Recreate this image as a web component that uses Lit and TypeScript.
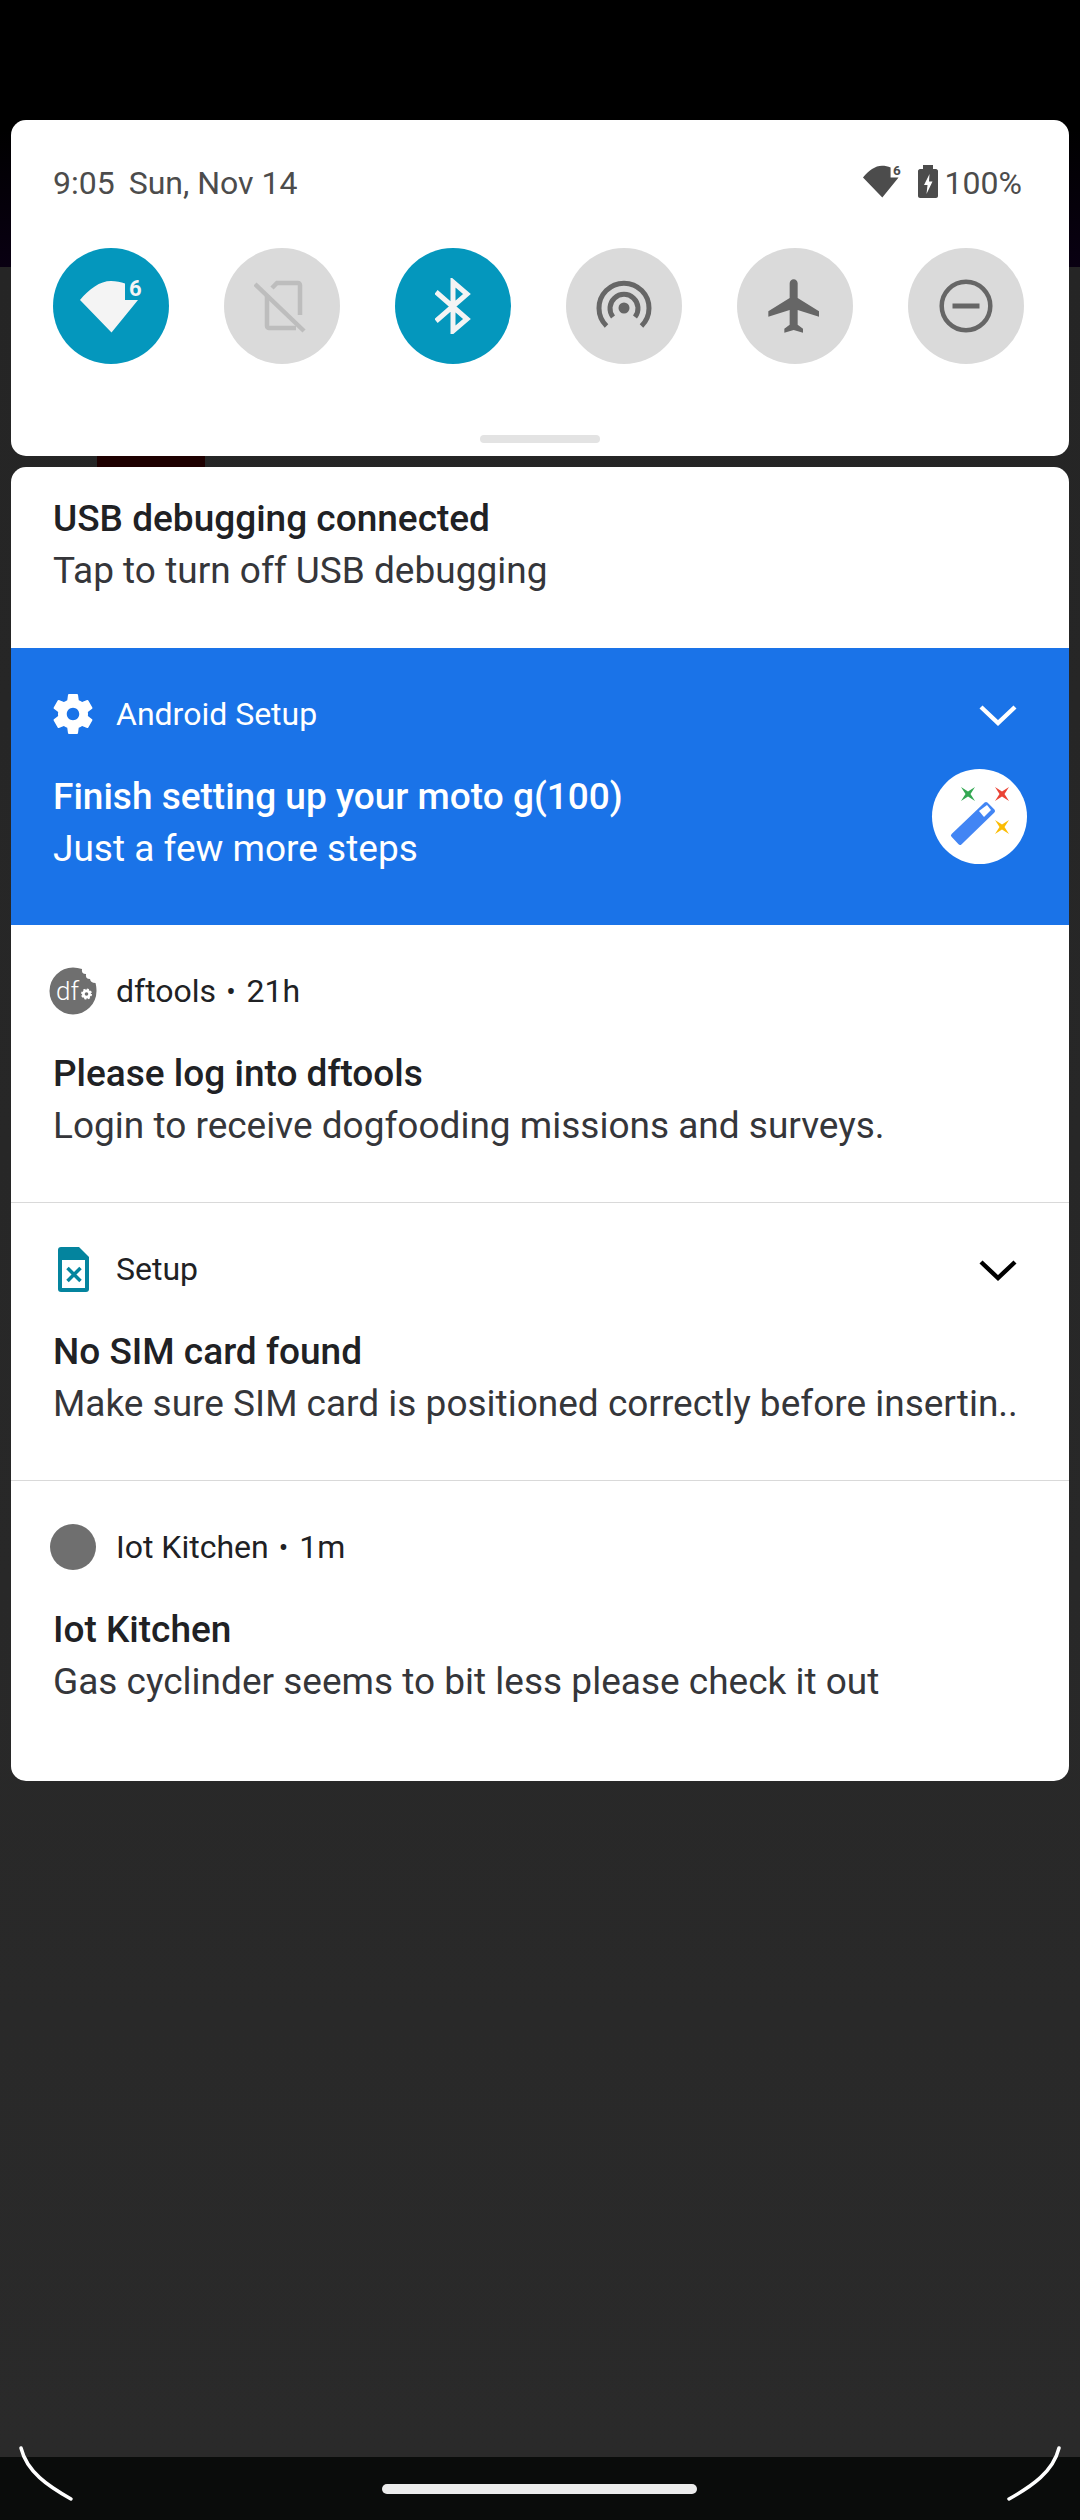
import { LitElement, css, html, svg } from 'lit'
import { customElement } from 'lit/decorators.js'

// wifi wedge with the little "6", drawn on a 62x53 box
const wifi6 = (fill: string) => svg`
  <path fill=${fill} d="M0 20C9 9 20 1 31 1c5 0 10 1 14 2.500v16.500h13L31.500 52.500Z"/>
  <text x="49" y="16" font-family="Roboto, sans-serif" font-size="22" font-weight="700" fill=${fill}>6</text>
`

const star = (x: number, y: number, fill: string) => svg`
  <path fill=${fill} transform="translate(${x} ${y})" d="M-7-7 0-2.500 7-7 2.500 0 7 7 0 2.500-7 7-2.500 0Z"/>
`

@customElement('qs-tile')
export class QsTile extends LitElement {
  static styles = css`
    :host {
      display: flex;
      align-items: center;
      justify-content: center;
      width: 116px;
      height: 116px;
      border-radius: 50%;
      background: #dadada;
    }
    :host([on]) {
      background: #0497bd;
    }
  `

  render() {
    return html`<slot></slot>`
  }
}

@customElement('notif-row')
export class NotifRow extends LitElement {
  static properties = {
    app: {},
    title: {},
    body: {},
    time: {},
    chevron: { type: Boolean },
  }
  app = ''
  title = ''
  body = ''
  time = ''
  chevron = false

  static styles = css`
    :host {
      display: block;
      color: #202124;
    }
    .head {
      display: flex;
      align-items: center;
      height: 48px;
      padding: 42px 42px 0 37px;
    }
    .icon {
      width: 50px;
      height: 48px;
      margin-right: 18px;
      display: flex;
      align-items: center;
      justify-content: center;
    }
    .app {
      font-size: 32px;
      white-space: nowrap;
    }
    .dot {
      margin: 0 11px 0 10px;
      font-size: 28px;
    }
    .chev {
      margin: 1px 10px 0 auto;
      display: flex;
      color: var(--chev, currentColor);
    }
    .title {
      margin: 33px 42px 0;
      font-size: 37px;
      line-height: 51.500px;
      font-weight: 500;
    }
    .body {
      margin: 0 20px 0 42px;
      font-size: 37px;
      line-height: 51.500px;
      white-space: nowrap;
      overflow: hidden;
      color: var(--body, #35363a);
    }
  `

  render() {
    return html`
      <div class="head">
        <div class="icon"><slot name="icon"></slot></div>
        <span class="app">${this.app}</span>
        ${this.time ? html`<span class="dot">•</span><span class="app">${this.time}</span>` : ''}
        ${this.chevron
          ? html`<span class="chev">
              <svg width="38" height="22" viewBox="0 0 38 22">
                <path d="M2 3 19 19 36 3" fill="none" stroke="currentColor" stroke-width="4.400"/>
              </svg>
            </span>`
          : ''}
      </div>
      <div class="title">${this.title}</div>
      <div class="body">${this.body}</div>
    `
  }
}

@customElement('app-root')
export class AppRoot extends LitElement {
  static styles = css`
    :host {
      display: block;
      width: 1080px;
      height: 2520px;
      position: relative;
      overflow: hidden;
      font-family: Roboto, 'Liberation Sans', sans-serif;
      background:
        linear-gradient(#000 130px, #090012 267px, transparent 267px),
        linear-gradient(#252525 267px, #2a2a2a 2457px);
    }
    .page {
      display: flex;
      flex-direction: column;
      gap: 11px;
      padding: 120px 11px 0;
    }
    .card {
      background: #fff;
      border-radius: 15px;
      overflow: hidden;
    }
    .qs {
      height: 336px;
      box-sizing: border-box;
      padding: 0 45px 0 42px;
      display: flex;
      flex-direction: column;
      position: relative;
    }
    .status {
      display: flex;
      align-items: center;
      height: 50px;
      margin-top: 38px;
      font-size: 32px;
      color: #4c4c4c;
    }
    .date {
      margin-left: 14px;
    }
    .sys {
      margin: 0 2px 0 auto;
      display: flex;
      align-items: center;
    }
    .sys svg {
      margin-top: -3px;
    }
    .wifi {
      overflow: visible;
    }
    .batt {
      margin: 0 7px 0 17px;
    }
    .tiles {
      display: flex;
      justify-content: space-between;
      margin-top: 40px;
    }
    .handle {
      position: absolute;
      left: 469px;
      bottom: 13px;
      width: 120px;
      height: 8px;
      border-radius: 4px;
      background: #e3e3e3;
    }
    .usb {
      height: 181px;
      box-sizing: border-box;
      padding: 26px 42px 0;
      color: #202124;
    }
    .usb div {
      font-size: 37px;
      line-height: 51.500px;
    }
    .usb .t {
      font-weight: 500;
    }
    .usb .s {
      color: #35363a;
    }
    .blue {
      position: relative;
      height: 277px;
      background: #1a73e8;
    }
    .blue notif-row {
      color: #fff;
      --body: #fff;
    }
    .list notif-row {
      height: 278px;
      border-bottom: 1px solid #d9d9d9;
      box-sizing: border-box;
    }
    .list notif-row:last-child {
      height: 300px;
      border-bottom: none;
    }
    .list .setup {
      --chev: #000;
    }
    .magic {
      position: absolute;
      right: 42px;
      top: 121px;
      width: 95px;
      height: 95px;
      border-radius: 50%;
      background: #fff;
    }
    .strip {
      position: absolute;
      top: 456px;
      left: 97px;
      width: 108px;
      height: 11px;
      background: #1e0000;
    }
    .nav {
      position: absolute;
      left: 0;
      right: 0;
      bottom: 0;
      height: 63px;
      background: #0a0c0b;
    }
    .pill {
      position: absolute;
      left: 382px;
      top: 27px;
      width: 315px;
      height: 10px;
      border-radius: 5px;
      background: #ececec;
    }
    .curves {
      position: absolute;
      left: 0;
      bottom: 0;
    }
  `

  render() {
    return html`
      <div class="strip"></div>
      <div class="page">
        <div class="card qs">
          <div class="status">
            <span>9:05</span><span class="date">Sun, Nov 14</span>
            <span class="sys">
              <svg class="wifi" width="38" height="33" viewBox="0 0 62 53">${wifi6('#4c4c4c')}</svg>
              <svg class="batt" width="20" height="33" viewBox="0 0 20 33">
                <path fill="#4c4c4c" d="M5 0h10v4h3c1 0 2 1 2 2v25c0 1-1 2-2 2H2c-1 0-2-1-2-2V6c0-1 1-2 2-2h3z"/>
                <path fill="#fff" d="M11.500 9 6 20h3.500l-1 9 6-12.500H11z"/>
              </svg>
              <span>100%</span>
            </span>
          </div>
          <div class="tiles">
            <qs-tile on>
              <svg class="wifi" width="62" height="53" viewBox="0 0 62 53">${wifi6('#f4f4f4')}</svg>
            </qs-tile>
            <qs-tile>
              <svg width="56" height="56" viewBox="254 278 56 56" fill="none" stroke="#bdbdbd" stroke-width="4.500">
                <path d="M272 288l5-5h21a2 2 0 0 1 2 2v30"/>
                <path d="M267 295v31a2 2 0 0 0 2 2h27"/>
                <path d="M255 284 304 331"/>
              </svg>
            </qs-tile>
            <qs-tile on>
              <svg width="36" height="56" viewBox="434 277 36 56" fill="none" stroke="#f4f4f4" stroke-width="5">
                <path d="M435 291 466 318 452 330V281L466 293 435 320"/>
              </svg>
            </qs-tile>
            <qs-tile>
              <svg width="56" height="56" viewBox="596 278 56 56" fill="none" stroke="#666" stroke-width="5">
                <circle cx="624" cy="308" r="5.500" fill="#666" stroke="none"/>
                <path d="M613 317A14 14 0 1 1 635 317"/>
                <path d="M606.500 326A25 25 0 1 1 641.500 326"/>
              </svg>
            </qs-tile>
            <qs-tile>
              <svg width="64" height="64" viewBox="0 0 24 24">
                <path fill="#666" d="M21 16v-2l-8-5V3.500c0-.83-.67-1.500-1.500-1.500S10 2.670 10 3.500V9l-8 5v2l8-2.500V19l-2 1.500V22l3.500-1 3.500 1v-1.500L13 19v-5.500l8 2.500z"/>
              </svg>
            </qs-tile>
            <qs-tile>
              <svg width="56" height="56" viewBox="0 0 56 56" fill="none" stroke="#666" stroke-width="4.500">
                <circle cx="28" cy="28" r="24.300"/>
                <path d="M14.500 28h27" stroke-width="5"/>
              </svg>
            </qs-tile>
          </div>
          <div class="handle"></div>
        </div>

        <div class="card">
          <div class="usb">
            <div class="t">USB debugging connected</div>
            <div class="s">Tap to turn off USB debugging</div>
          </div>
          <div class="blue">
            <notif-row app="Android Setup" title="Finish setting up your moto g(100)" body="Just a few more steps" chevron>
              <svg slot="icon" width="50" height="50" viewBox="0 0 24 24">
                <path fill="#fff" fill-rule="evenodd" d="M19.140 12.940c.04-.3.06-.61.06-.94 0-.32-.02-.64-.07-.94l2.030-1.580a.49.49 0 0 0 .12-.61l-1.920-3.320a.488.488 0 0 0-.59-.22l-2.390.96c-.5-.38-1.030-.7-1.620-.94l-.36-2.540a.484.484 0 0 0-.48-.41h-3.840c-.24 0-.43.17-.47.41l-.36 2.540c-.59.24-1.130.57-1.620.94l-2.390-.96c-.22-.08-.47 0-.59.22L2.740 8.870c-.12.21-.08.47.12.61l2.030 1.580c-.05.3-.09.63-.09.94s.02.64.07.94l-2.030 1.580a.49.49 0 0 0-.12.61l1.920 3.320c.12.22.37.29.59.22l2.390-.96c.5.38 1.030.7 1.620.94l.36 2.540c.05.24.24.41.48.41h3.840c.24 0 .44-.17.47-.41l.36-2.540c.59-.24 1.130-.56 1.620-.94l2.390.96c.22.08.47 0 .59-.22l1.920-3.320c.12-.22.07-.47-.12-.61l-2.010-1.580zM12 15c-1.650 0-3-1.350-3-3s1.350-3 3-3 3 1.350 3 3-1.350 3-3 3z"/>
              </svg>
            </notif-row>
            <div class="magic">
              <svg width="95" height="95" viewBox="0 0 95 95">
                ${star(36, 25, '#34a853')}
                ${star(70, 25, '#ea4335')}
                ${star(70, 58, '#fbbc04')}
                <polygon fill="#4285f4" stroke="#4285f4" stroke-width="4" stroke-linejoin="round" points="21,66.500 28,74 61,42 54,35"/>
                <polygon fill="#fff" points="55,36 59,41 52,48 47,42"/>
              </svg>
            </div>
          </div>
          <div class="list">
            <notif-row app="dftools" time="21h" title="Please log into dftools" body="Login to receive dogfooding missions and surveys.">
              <svg slot="icon" width="48" height="48" viewBox="0 0 48 48">
                <path fill="#6f6f6f" d="M24 .5C27 .5 30 1 33 2Q32 7 37 7 36 12 41 12 41.500 16 46.500 16C47.200 18.500 47.500 21 47.500 24A23.500 23.500 0 1 1 24 .5z"/>
                <text x="7" y="33" font-family="Roboto, sans-serif" font-size="26" font-weight="300" fill="#fff">df</text>
                <circle cx="37.500" cy="27" r="4.500" fill="#fff" stroke="#fff" stroke-width="2" stroke-dasharray="2 1.500"/>
                <circle cx="37.500" cy="27" r="1.800" fill="#6f6f6f"/>
              </svg>
            </notif-row>
            <notif-row class="setup" app="Setup" title="No SIM card found" body="Make sure SIM card is positioned correctly before insertin.." chevron>
              <svg slot="icon" width="31" height="45" viewBox="0 0 31 45">
                <path fill="#04849e" d="M3 0h18l10 10v32a3 3 0 0 1-3 3H3a3 3 0 0 1-3-3V3a3 3 0 0 1 3-3z"/>
                <rect x="4" y="13" width="23" height="28" fill="#fff"/>
                <path d="M9.500 21 22.500 34M22.500 21 9.500 34" stroke="#04849e" stroke-width="3.500"/>
              </svg>
            </notif-row>
            <notif-row app="Iot Kitchen" time="1m" title="Iot Kitchen" body="Gas cyclinder seems to bit less please check it out">
              <svg slot="icon" width="46" height="46" viewBox="0 0 46 46"><circle cx="23" cy="23" r="23" fill="#6f6f6f"/></svg>
            </notif-row>
          </div>
        </div>
      </div>
      <div class="nav"><div class="pill"></div></div>
      <svg class="curves" width="1080" height="80" viewBox="0 2440 1080 80" fill="none" stroke="#fff" stroke-width="3.500" stroke-linecap="round">
        <path d="M21 2448C27 2472 48 2486 71 2499"/>
        <path d="M1059 2448C1053 2472 1032 2486 1009 2499"/>
      </svg>
    `
  }
}
